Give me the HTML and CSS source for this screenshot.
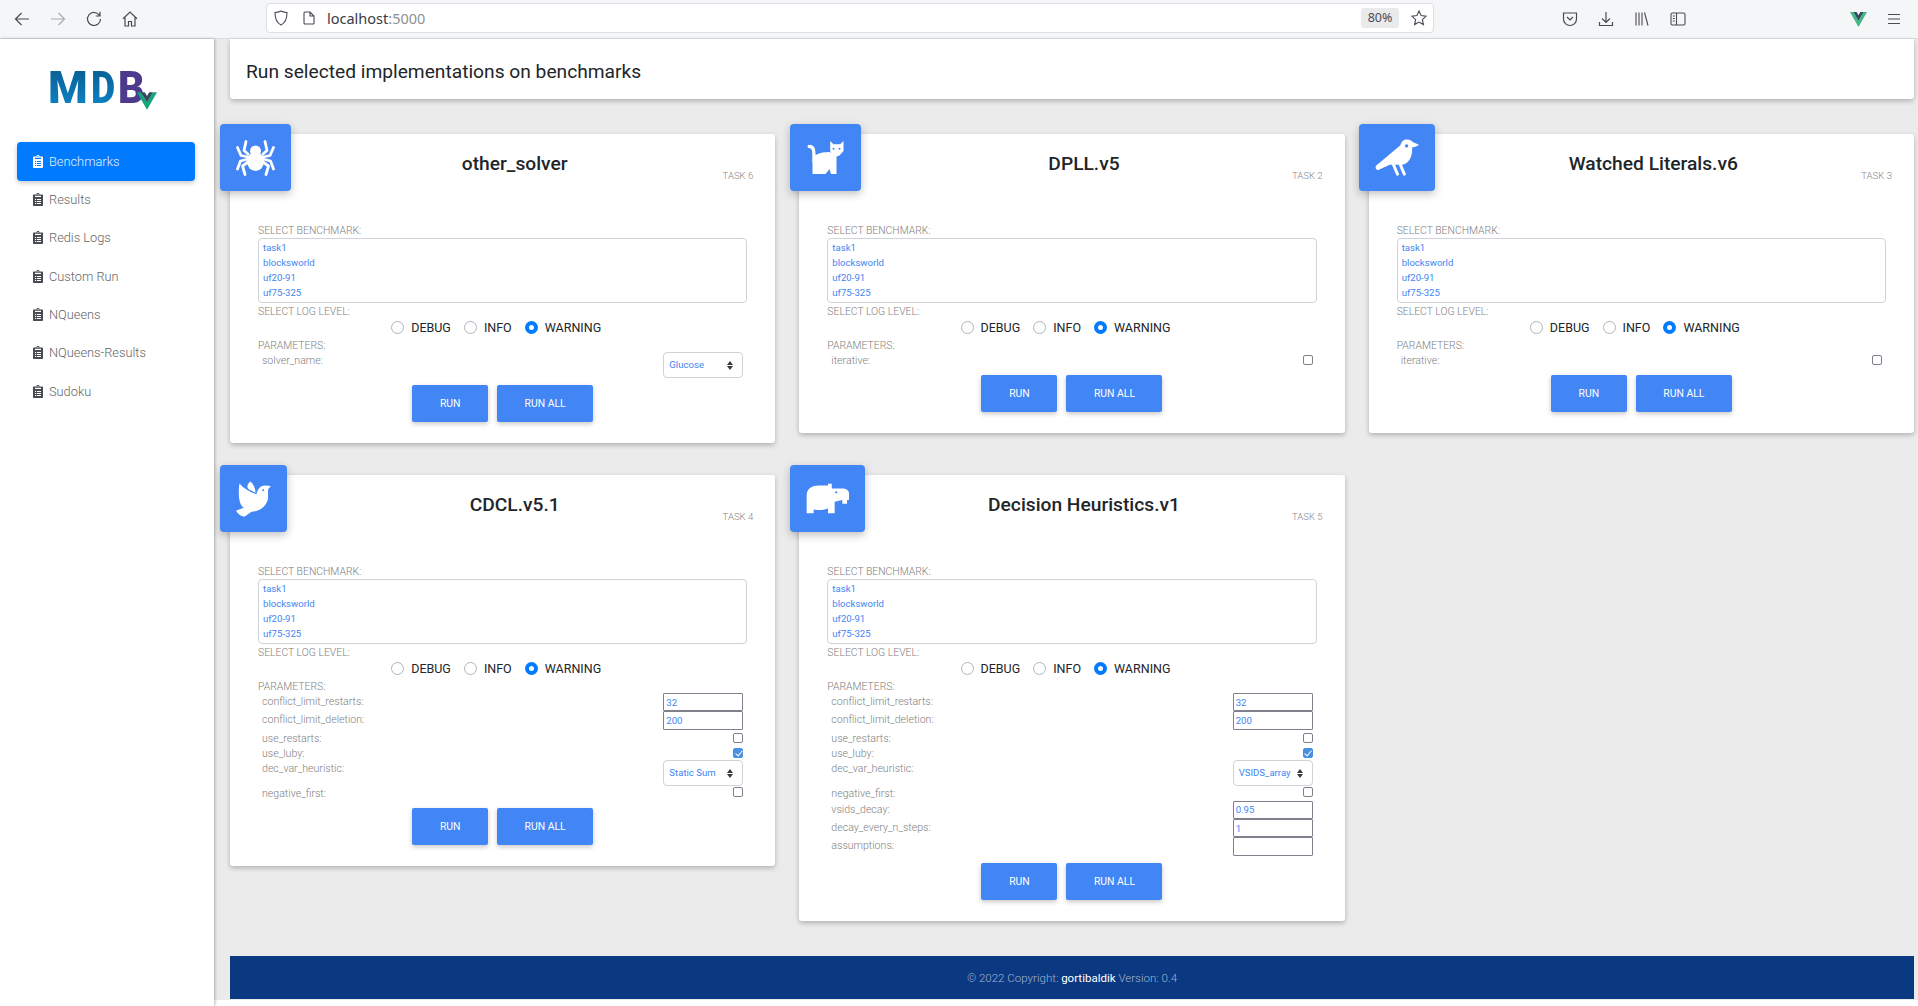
FILE: index.html
```html
<!DOCTYPE html>
<html lang="en">
<head>
    <meta charset="UTF-8">
    <title>Benchmarks</title>
    <link rel="stylesheet" href="styles.css">
</head>
<body>
    <svg class="defs" aria-hidden="true">
        <symbol id="clipboard" viewBox="0 0 10 13">
            <path fill="currentColor" d="M3.4 1.4C3.5.6 4.2 0 5 0s1.5.6 1.6 1.4H9c.6 0 1 .4 1 1V12c0 .6-.4 1-1 1H1c-.6 0-1-.4-1-1V2.400c0-.6.4-1 1-1z"/>
            <path fill="var(--cut)" d="M2 2.800h6v1.100H2zM2 6h1.200v1H2zM4 6h4v1H4zM2 8h1.200v1H2zM4 8h4v1H4zM2 10h1.200v1H2zM4 10h4v1H4z"/>
            <circle cx="5" cy="1.500" r=".6" fill="var(--cut)"/>
        </symbol>
    </svg>

    <header class="toolbar">
        <div class="tool-group">
            <span class="tool">
                <svg width="16" height="16" viewBox="0 0 16 16" fill="none" stroke="#4a4a55" stroke-width="1.200"><path d="M15 8H1.500M7.500 2l-6 6 6 6"/></svg>
            </span>
            <span class="tool">
                <svg width="16" height="16" viewBox="0 0 16 16" fill="none" stroke="#a9aab0" stroke-width="1.200"><path d="M1 8h13.500M8.500 2l6 6-6 6"/></svg>
            </span>
            <span class="tool">
                <svg width="16" height="16" viewBox="0 0 16 16" fill="none" stroke="#4a4a55" stroke-width="1.200"><path d="M13.500 4.500A6.500 6.500 0 1 0 14.500 8M14 .8v4.200H9.800"/></svg>
            </span>
            <span class="tool">
                <svg width="16" height="16" viewBox="0 0 16 16" fill="none" stroke="#4a4a55" stroke-width="1.200"><path d="M1 7.800 8 1l7 6.800M3 6.500V15h3.500v-4.500h3V15H13V6.500"/></svg>
            </span>
        </div>
        <div class="urlbar">
            <svg class="url-shield" width="14" height="16" viewBox="0 0 14 16" fill="none" stroke="#4a4a55" stroke-width="1.100"><path d="M7 1c2 1 4 1.500 6 1.500C13 9 11 13 7 15 3 13 1 9 1 2.500 3 2.500 5 2 7 1z"/></svg>
            <svg class="url-page" width="12" height="14" viewBox="0 0 12 14" fill="none" stroke="#4a4a55" stroke-width="1.100"><path d="M1 2c0-.6.4-1 1-1h5l4 4v7c0 .6-.4 1-1 1H2c-.6 0-1-.4-1-1zM7 1v4h4"/></svg>
            <span class="url-text">localhost<span class="url-port">:5000</span></span>
            <span class="url-zoom">80%</span>
            <svg class="url-star" width="16" height="16" viewBox="0 0 16 16" fill="none" stroke="#4a4a55" stroke-width="1.100"><path d="m8 1 2.100 4.600 5 .6-3.700 3.400 1 5L8 12.100 3.600 14.600l1-5L.9 6.200l5-.6z"/></svg>
        </div>
        <div class="tool-group tools-right">
            <span class="tool">
                <svg width="16" height="16" viewBox="0 0 16 16" fill="none" stroke="#4a4a55" stroke-width="1.200"><path d="M1.500 2h13v6a6.500 6.500 0 0 1-13 0zM5 6l3 3 3-3"/></svg>
            </span>
            <span class="tool">
                <svg width="16" height="16" viewBox="0 0 16 16" fill="none" stroke="#4a4a55" stroke-width="1.200"><path d="M8 1v10M4 7.500l4 4 4-4M1.500 11v3.500h13V11"/></svg>
            </span>
            <span class="tool">
                <svg width="16" height="16" viewBox="0 0 16 16" fill="none" stroke="#4a4a55" stroke-width="1.100"><path d="M2 1.500v13M5 1.500v13M8 1.500v13M10.500 1.500l3.500 13"/></svg>
            </span>
            <span class="tool">
                <svg width="16" height="16" viewBox="0 0 16 16" fill="none" stroke="#4a4a55" stroke-width="1.100"><rect x="1" y="2" width="14" height="12" rx="1.500"/><path d="M6.500 2v12M2.800 5h2M2.800 7.500h2M2.800 10h2"/></svg>
            </span>
        </div>
        <div class="tool-group tools-end">
            <span class="tool">
                <svg width="17" height="15" viewBox="0 0 17 15"><path fill="#41b883" d="M0 0h3.400l5.100 8.800L13.600 0H17L8.500 15z"/><path fill="#35495e" d="M3.400 0h3.200l1.900 3.300L10.400 0h3.200L8.500 8.800z"/></svg>
            </span>
            <span class="tool">
                <svg width="14" height="14" viewBox="0 0 14 14" stroke="#4a4a55" stroke-width="1.200"><path d="M1 2.500h12M1 7h12M1 11.500h12"/></svg>
            </span>
        </div>
    </header>

    <div class="layout">
        <aside class="sidebar">
            <div class="logo">
                <span class="logo-m">M</span><span class="logo-d">D</span><span class="logo-b">B</span>
                <svg class="logo-v" width="20" height="18" viewBox="0 0 17 15"><path fill="#0fa67c" d="M0 0h3.400l5.100 8.800L13.600 0H17L8.500 15z"/><path fill="#35495e" d="M3.400 0h3.200l1.900 3.300L10.400 0h3.200L8.500 8.800z"/></svg>
            </div>
            <nav class="nav">
                <a class="nav-item active"><svg class="nav-icon"><use href="#clipboard"/></svg>Benchmarks</a>
                <a class="nav-item"><svg class="nav-icon"><use href="#clipboard"/></svg>Results</a>
                <a class="nav-item"><svg class="nav-icon"><use href="#clipboard"/></svg>Redis Logs</a>
                <a class="nav-item"><svg class="nav-icon"><use href="#clipboard"/></svg>Custom Run</a>
                <a class="nav-item"><svg class="nav-icon"><use href="#clipboard"/></svg>NQueens</a>
                <a class="nav-item"><svg class="nav-icon"><use href="#clipboard"/></svg>NQueens-Results</a>
                <a class="nav-item"><svg class="nav-icon"><use href="#clipboard"/></svg>Sudoku</a>
            </nav>
        </aside>

        <main class="content">
            <div class="page-title">Run selected implementations on benchmarks</div>

            <div class="cards">
                <!-- other_solver -->
                <section class="card">
                    <div class="card-icon">
                        <svg width="39" height="36" viewBox="0 0 39 36">
                            <g fill="none" stroke="#fff" stroke-width="2.800" stroke-linecap="round" stroke-linejoin="round">
                                <path d="M10 1.500 8 10.500l4 3.500M29 1.500l2 9-4 3.500M1.500 7.500 5 15.500l7 1.500M37.500 7.500 34 15.500 27 17M1.500 29l3-8 7.500-2M37.500 29l-3-8-7.500-2M9 34.500l-2.500-8.500 5.500-4M30 34.500l2.500-8.500-5.500-4"/>
                            </g>
                            <circle cx="19.500" cy="11" r="5.500" fill="#fff"/>
                            <ellipse cx="19.500" cy="21.500" rx="8.500" ry="9.500" fill="#fff"/>
                        </svg>
                    </div>
                    <div class="card-head">
                        <h2 class="card-title">other_solver</h2>
                        <div class="card-task">TASK 6</div>
                    </div>
                    <div class="field-label">Select benchmark:</div>
                    <div class="listbox">
                        <div>task1</div>
                        <div>blocksworld</div>
                        <div>uf20-91</div>
                        <div>uf75-325</div>
                    </div>
                    <div class="field-label">Select log level:</div>
                    <div class="levels">
                        <label class="level"><input type="radio" name="level1">DEBUG</label>
                        <label class="level"><input type="radio" name="level1">INFO</label>
                        <label class="level"><input type="radio" name="level1" checked>WARNING</label>
                    </div>
                    <div class="field-label params-label">Parameters:</div>
                    <div class="param">
                        <span class="param-name">solver_name:</span>
                        <span class="select">Glucose</span>
                    </div>
                    <div class="actions">
                        <button class="btn btn-run">RUN</button>
                        <button class="btn btn-all">RUN ALL</button>
                    </div>
                </section>

                <!-- DPLL -->
                <section class="card">
                    <div class="card-icon">
                        <svg width="39" height="33" viewBox="-1.500 0 39 33">
                            <path fill="none" stroke="#fff" stroke-width="3.400" stroke-linecap="round" d="M1.700 5.500h.8C5 5.500 6.500 8 6.500 14v6"/>
                            <path fill="#fff" d="M5 33V20c0-6 7-9 17-9l7 4v18h-5.500L22 28l5-6-9 11zM22.700 0 26 3.300h6.700L36 0v10l-4 4.500-2.700 1-4.300-1-2.300-4.500z"/>
                            <circle cx="26" cy="7.700" r="1" fill="#4285f4"/>
                            <circle cx="32" cy="7.700" r="1" fill="#4285f4"/>
                        </svg>
                    </div>
                    <div class="card-head">
                        <h2 class="card-title">DPLL.v5</h2>
                        <div class="card-task">TASK 2</div>
                    </div>
                    <div class="field-label">Select benchmark:</div>
                    <div class="listbox">
                        <div>task1</div>
                        <div>blocksworld</div>
                        <div>uf20-91</div>
                        <div>uf75-325</div>
                    </div>
                    <div class="field-label">Select log level:</div>
                    <div class="levels">
                        <label class="level"><input type="radio" name="level2">DEBUG</label>
                        <label class="level"><input type="radio" name="level2">INFO</label>
                        <label class="level"><input type="radio" name="level2" checked>WARNING</label>
                    </div>
                    <div class="field-label params-label">Parameters:</div>
                    <div class="param param-check param-single">
                        <span class="param-name">iterative:</span>
                        <input class="check" type="checkbox">
                    </div>
                    <div class="actions">
                        <button class="btn btn-run">RUN</button>
                        <button class="btn btn-all">RUN ALL</button>
                    </div>
                </section>

                <!-- Watched Literals -->
                <section class="card">
                    <div class="card-icon">
                        <svg width="44" height="37" viewBox="0 0 45 37">
                            <path fill="#fff" d="M1 27 26 6c1-4 3-6 7-6 3 0 5 2 6 3l6 2.500C42 8 39 8 38 8c.5 10-3 16-10 18H15L4 31c-3 1-4-2-3-4z"/>
                            <path fill="none" stroke="#fff" stroke-width="3" stroke-linecap="round" d="m19 26 4 9.500M26 26l4 9.500"/>
                            <circle cx="32.300" cy="6.700" r="1.700" fill="#4285f4"/>
                        </svg>
                    </div>
                    <div class="card-head">
                        <h2 class="card-title">Watched Literals.v6</h2>
                        <div class="card-task">TASK 3</div>
                    </div>
                    <div class="field-label">Select benchmark:</div>
                    <div class="listbox">
                        <div>task1</div>
                        <div>blocksworld</div>
                        <div>uf20-91</div>
                        <div>uf75-325</div>
                    </div>
                    <div class="field-label">Select log level:</div>
                    <div class="levels">
                        <label class="level"><input type="radio" name="level3">DEBUG</label>
                        <label class="level"><input type="radio" name="level3">INFO</label>
                        <label class="level"><input type="radio" name="level3" checked>WARNING</label>
                    </div>
                    <div class="field-label params-label">Parameters:</div>
                    <div class="param param-check param-single">
                        <span class="param-name">iterative:</span>
                        <input class="check" type="checkbox">
                    </div>
                    <div class="actions">
                        <button class="btn btn-run">RUN</button>
                        <button class="btn btn-all">RUN ALL</button>
                    </div>
                </section>

                <!-- CDCL -->
                <section class="card">
                    <div class="card-icon">
                        <svg width="35" height="36" viewBox="0 0 36 36">
                            <path fill="#fff" d="M3.500 2c4.500 5 10.500 9 17.500 11 1-4 3-9 9-9l6 .5L33 8v8c0 8-8 15-17 15l-7 5c-4 0-7-3-9-6l8-3C3 24 2 14 3.500 2z"/>
                            <path fill="#fff" d="M15 0c-4 3-4 6-2 8l7 3.500C20 7 18 3 15 0z"/>
                            <circle cx="28" cy="9" r="1" fill="#4285f4"/>
                        </svg>
                    </div>
                    <div class="card-head">
                        <h2 class="card-title">CDCL.v5.1</h2>
                        <div class="card-task">TASK 4</div>
                    </div>
                    <div class="field-label">Select benchmark:</div>
                    <div class="listbox">
                        <div>task1</div>
                        <div>blocksworld</div>
                        <div>uf20-91</div>
                        <div>uf75-325</div>
                    </div>
                    <div class="field-label">Select log level:</div>
                    <div class="levels">
                        <label class="level"><input type="radio" name="level4">DEBUG</label>
                        <label class="level"><input type="radio" name="level4">INFO</label>
                        <label class="level"><input type="radio" name="level4" checked>WARNING</label>
                    </div>
                    <div class="field-label params-label">Parameters:</div>
                    <div class="param param-input">
                        <span class="param-name">conflict_limit_restarts:</span>
                        <input class="text-input" type="text" value="32">
                    </div>
                    <div class="param param-input">
                        <span class="param-name">conflict_limit_deletion:</span>
                        <input class="text-input" type="text" value="200">
                    </div>
                    <div class="param param-check">
                        <span class="param-name">use_restarts:</span>
                        <input class="check" type="checkbox">
                    </div>
                    <div class="param param-check">
                        <span class="param-name">use_luby:</span>
                        <input class="check" type="checkbox" checked>
                    </div>
                    <div class="param">
                        <span class="param-name">dec_var_heuristic:</span>
                        <span class="select">Static Sum</span>
                    </div>
                    <div class="param param-check param-after-select">
                        <span class="param-name">negative_first:</span>
                        <input class="check" type="checkbox">
                    </div>
                    <div class="actions">
                        <button class="btn btn-run">RUN</button>
                        <button class="btn btn-all">RUN ALL</button>
                    </div>
                </section>

                <!-- Decision Heuristics -->
                <section class="card">
                    <div class="card-icon">
                        <svg width="43" height="31" viewBox="0 0 45 31">
                            <path fill="#fff" d="M.7 31V12C.7 5 7 2 13 2h10V0h4v5h11c4 0 7 2 7 5v7h-2v4h-5v-4l-8 2v12h-7v-5c-6 2-9 2-15 1v4z"/>
                            <circle cx="31.700" cy="9" r="1.200" fill="#4285f4"/>
                        </svg>
                    </div>
                    <div class="card-head">
                        <h2 class="card-title">Decision Heuristics.v1</h2>
                        <div class="card-task">TASK 5</div>
                    </div>
                    <div class="field-label">Select benchmark:</div>
                    <div class="listbox">
                        <div>task1</div>
                        <div>blocksworld</div>
                        <div>uf20-91</div>
                        <div>uf75-325</div>
                    </div>
                    <div class="field-label">Select log level:</div>
                    <div class="levels">
                        <label class="level"><input type="radio" name="level5">DEBUG</label>
                        <label class="level"><input type="radio" name="level5">INFO</label>
                        <label class="level"><input type="radio" name="level5" checked>WARNING</label>
                    </div>
                    <div class="field-label params-label">Parameters:</div>
                    <div class="param param-input">
                        <span class="param-name">conflict_limit_restarts:</span>
                        <input class="text-input" type="text" value="32">
                    </div>
                    <div class="param param-input">
                        <span class="param-name">conflict_limit_deletion:</span>
                        <input class="text-input" type="text" value="200">
                    </div>
                    <div class="param param-check">
                        <span class="param-name">use_restarts:</span>
                        <input class="check" type="checkbox">
                    </div>
                    <div class="param param-check">
                        <span class="param-name">use_luby:</span>
                        <input class="check" type="checkbox" checked>
                    </div>
                    <div class="param">
                        <span class="param-name">dec_var_heuristic:</span>
                        <span class="select">VSIDS_array</span>
                    </div>
                    <div class="param param-check param-after-select">
                        <span class="param-name">negative_first:</span>
                        <input class="check" type="checkbox">
                    </div>
                    <div class="param param-input">
                        <span class="param-name">vsids_decay:</span>
                        <input class="text-input" type="text" value="0.95">
                    </div>
                    <div class="param param-input">
                        <span class="param-name">decay_every_n_steps:</span>
                        <input class="text-input" type="text" value="1">
                    </div>
                    <div class="param param-input param-tall">
                        <span class="param-name">assumptions:</span>
                        <input class="text-input" type="text">
                    </div>
                    <div class="actions">
                        <button class="btn btn-run">RUN</button>
                        <button class="btn btn-all">RUN ALL</button>
                    </div>
                </section>
            </div>

            <footer class="footer">© 2022 Copyright: <a class="footer-link">gortibaldik</a> Version: 0.4</footer>
        </main>
    </div>
</body>
</html>
```

FILE: styles.css
```css
* {
    margin: 0;
    padding: 0;
    box-sizing: border-box;
}

body {
    font-family: Roboto, "Liberation Sans", sans-serif;
    background: #fff;
    color: #212529;
    height: 1006px;
    overflow: hidden;
}

.defs {
    display: none;
}

/* Browser toolbar */
.toolbar {
    display: flex;
    align-items: flex-start;
    height: 39px;
    padding: 3px 6px 0 4px;
    background: #f5f6f7;
    border-bottom: 1px solid #dcdee3;
}

.tool-group {
    display: flex;
}

.tool {
    display: flex;
    align-items: center;
    justify-content: center;
    width: 36px;
    height: 32px;
}

.tools-right {
    margin-left: 118px;
}

.tools-end {
    margin-left: 144px;
}

.urlbar {
    display: flex;
    align-items: center;
    width: 1168px;
    height: 30px;
    margin-left: 118px;
    padding: 0 6px 0 7px;
    background: #fff;
    border: 1px solid #dcdee3;
    border-radius: 4px;
}

.url-page {
    margin-left: 15px;
}

.url-text {
    margin-left: 12px;
    font-family: "Noto Sans", sans-serif;
    font-size: 14.5px;
    color: #3a3a44;
}

.url-port {
    color: #8f9096;
}

.url-zoom {
    margin-left: auto;
    width: 38px;
    height: 20px;
    background: #e9eaec;
    border-radius: 3px;
    font-family: "Noto Sans", sans-serif;
    font-size: 12.5px;
    line-height: 20px;
    text-align: center;
    color: #4a4a55;
}

.url-star {
    margin-left: 12px;
}

/* Page layout */
.layout {
    display: flex;
    height: 967px;
}

.sidebar {
    width: 214px;
    flex-shrink: 0;
    background: #fff;
    box-shadow: 1px 0 3px rgba(0, 0, 0, 0.28);
    position: relative;
    z-index: 1;
}

.logo {
    display: flex;
    height: 103px;
    padding: 30px 0 0 48px;
    font-size: 44px;
    font-weight: 900;
    line-height: 38px;
    position: relative;
}

.logo-m,
.logo-d,
.logo-b {
    display: block;
    transform-origin: left center;
}

.logo-m,
.logo-d {
    background: linear-gradient(180deg, #0a5f94 0%, #0d8fd6 70%, #1a9be0 100%);
    -webkit-background-clip: text;
    background-clip: text;
    color: transparent;
}

.logo-m {
    margin-right: 4px;
    transform: scaleX(1.03);
}

.logo-d {
    margin-right: -1px;
    transform: scaleX(0.85);
}

.logo-b {
    color: #4c3a8c;
    transform: scaleX(0.93);
}

.logo-v {
    position: absolute;
    left: 137px;
    top: 53px;
}

.nav {
    display: flex;
    flex-direction: column;
    gap: 0;
    padding: 0 19px 0 17px;
}

.nav-item {
    display: flex;
    align-items: center;
    height: 38.300px;
    padding-left: 16px;
    border-radius: 4px;
    font-size: 12.800px;
    font-weight: 300;
    color: #666;
    --cut: #fff;
}

.nav-item.active {
    height: 39px;
    margin-bottom: -0.500px;
    background: #007bff;
    color: #e6f0ff;
    box-shadow: 0 2px 5px rgba(0, 0, 0, 0.22);
    --cut: #007bff;
}

.nav-icon {
    width: 10px;
    height: 13px;
    margin-right: 6px;
    color: #474c52;
}

.nav-item.active .nav-icon {
    color: #fff;
}

.content {
    flex: 1;
    height: 961px;
    padding: 0 4px 0 16px;
    background: #ebebeb;
}

.page-title {
    height: 60px;
    padding-left: 16px;
    background: #fff;
    border-radius: 0 0 3px 3px;
    box-shadow: 0 2px 5px rgba(0, 0, 0, 0.25);
    font-size: 19.200px;
    font-weight: 400;
    line-height: 66px;
    color: #212529;
}

/* Cards */
.cards {
    display: grid;
    grid-template-columns: repeat(3, 1fr);
    align-items: start;
    gap: 32px 24px;
    margin-top: 35px;
    margin-bottom: 35px;
}

.card {
    position: relative;
    padding: 0 28px 21px;
    background: #fff;
    border-radius: 3px;
    box-shadow: 0 2px 5px rgba(0, 0, 0, 0.25);
}

.card-icon {
    position: absolute;
    top: -10px;
    left: -9.700px;
    display: flex;
    align-items: center;
    justify-content: center;
    height: 67px;
    padding: 0 16px;
    background: #4285f4;
    border-radius: 4px;
    box-shadow: 0 3px 8px rgba(0, 0, 0, 0.25);
}

.card-head {
    height: 88px;
    padding: 18px 0 0 24px;
}

.card-title {
    font-size: 19.200px;
    font-weight: 500;
    line-height: 24px;
    text-align: center;
    color: #212529;
}

.card-task {
    margin: -6px -6px 0 0;
    font-size: 9.600px;
    font-weight: 300;
    line-height: 12px;
    text-align: right;
    color: #888;
}

/* text sits 1px below the top of its box, the box keeps its height */
.field-label {
    height: 16px;
    padding-top: 1px;
    font-size: 10.400px;
    font-weight: 300;
    line-height: 16px;
    text-transform: uppercase;
    color: #808080;
}

.params-label {
    height: 15px;
    line-height: 15px;
}

.listbox {
    height: 65px;
    padding: 1px 4px 0;
    border: 1px solid #ced4da;
    border-radius: 4px;
    font-size: 9.600px;
    line-height: 15px;
    color: #4285f4;
}

.levels {
    display: flex;
    justify-content: center;
    height: 18px;
    padding-bottom: 2px;
}

.level {
    display: flex;
    align-items: center;
    margin-right: 13px;
    font-size: 12.500px;
    font-weight: 400;
    color: #212529;
}

.level input {
    appearance: none;
    width: 13px;
    height: 13px;
    margin-right: 7px;
    background: #fff;
    border: 1px solid #adb5bd;
    border-radius: 50%;
}

.level input:checked {
    background: #fff;
    border: 4px solid #007bff;
}

/* Parameter rows */
.param {
    display: flex;
    justify-content: space-between;
    padding: 0 4px;
    height: 26px;
}

.param-input {
    height: 18.300px;
}

.param-tall,
.param-tall .text-input {
    height: 19.300px;
}

.param-check {
    height: 15px;
}

.param-single {
    height: 16px;
}

.param-name {
    padding-top: 1px;
    font-size: 10.600px;
    font-weight: 300;
    line-height: 15px;
    color: #808080;
}

.select {
    position: relative;
    width: 80px;
    height: 26px;
    padding-left: 5px;
    border: 1px solid #ced4da;
    border-radius: 4px;
    font-size: 9.600px;
    line-height: 24px;
    color: #4285f4;
}

/* up and down arrows of the select */
.select::before,
.select::after {
    content: '';
    position: absolute;
    right: 9px;
    border-left: 3px solid transparent;
    border-right: 3px solid transparent;
}

.select::before {
    top: 8px;
    border-bottom: 4px solid #343a40;
}

.select::after {
    top: 13px;
    border-top: 4px solid #343a40;
}

.text-input {
    width: 80px;
    height: 18.300px;
    padding-left: 2px;
    background: #fff;
    border: 1px solid #80808c;
    border-radius: 1px;
    font-family: inherit;
    font-size: 9.600px;
    color: #4285f4;
}

.check {
    appearance: none;
    position: relative;
    width: 10px;
    height: 10px;
    margin-top: 3px;
    background: #fff;
    border: 1px solid #80808c;
    border-radius: 2px;
}

.param-after-select .check {
    margin-top: 1px;
}

.param-after-select .param-name {
    padding-top: 0;
}

.check:checked {
    background: #4a90e2;
    border-color: #4a90e2;
}

.check:checked::after {
    content: '';
    position: absolute;
    left: 2.500px;
    top: 0;
    width: 3px;
    height: 6px;
    border: solid #fff;
    border-width: 0 1.200px 1.200px 0;
    transform: rotate(40deg);
}

.actions {
    display: flex;
    justify-content: center;
    gap: 9px;
    margin-top: 7px;
}

.btn {
    height: 37px;
    background: #4285f4;
    border: none;
    border-radius: 2px;
    box-shadow: 0 2px 5px rgba(0, 0, 0, 0.22);
    font-family: inherit;
    font-size: 10.400px;
    font-weight: 400;
    color: #fff;
}

.btn-run {
    width: 76px;
}

.btn-all {
    width: 96px;
}

.footer {
    height: 43px;
    background: #0a3981;
    font-size: 11.520px;
    font-weight: 300;
    line-height: 44px;
    text-align: center;
    color: #a3b3cf;
}

.footer-link {
    color: #fff;
    font-weight: 400;
}
```
